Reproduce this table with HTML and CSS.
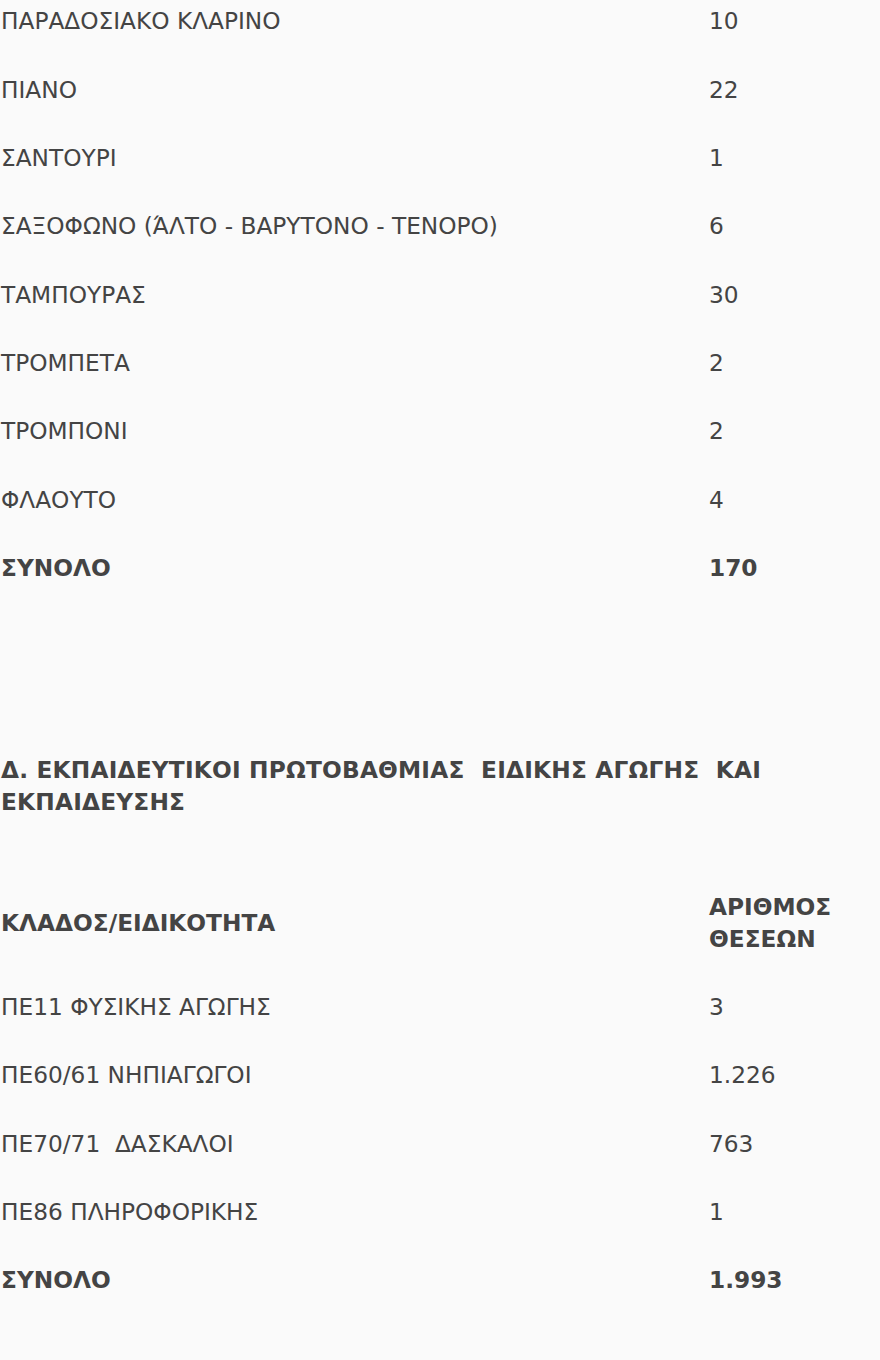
FILE: index.html
```html
<!DOCTYPE html>
<html lang="el">
<head>
<meta charset="utf-8">
<title>Θέσεις</title>
<link rel="stylesheet" href="styles.css">
</head>
<body>
<div class="page">
  <table class="list first">
    <tbody>
      <tr><td class="name">ΠΑΡΑΔΟΣΙΑΚΟ ΚΛΑΡΙΝΟ</td><td class="num">10</td></tr>
      <tr><td class="name">ΠΙΑΝΟ</td><td class="num">22</td></tr>
      <tr><td class="name">ΣΑΝΤΟΥΡΙ</td><td class="num">1</td></tr>
      <tr><td class="name">ΣΑΞΟΦΩΝΟ (ΆΛΤΟ - ΒΑΡΥΤΟΝΟ - ΤΕΝΟΡΟ)</td><td class="num">6</td></tr>
      <tr><td class="name">ΤΑΜΠΟΥΡΑΣ</td><td class="num">30</td></tr>
      <tr><td class="name">ΤΡΟΜΠΕΤΑ</td><td class="num">2</td></tr>
      <tr><td class="name">ΤΡΟΜΠΟΝΙ</td><td class="num">2</td></tr>
      <tr><td class="name">ΦΛΑΟΥΤΟ</td><td class="num">4</td></tr>
      <tr class="total"><td class="name">ΣΥΝΟΛΟ</td><td class="num">170</td></tr>
    </tbody>
  </table>

  <h3 class="section">Δ. ΕΚΠΑΙΔΕΥΤΙΚΟΙ ΠΡΩΤΟΒΑΘΜΙΑΣ &nbsp;ΕΙΔΙΚΗΣ ΑΓΩΓΗΣ &nbsp;ΚΑΙ ΕΚΠΑΙΔΕΥΣΗΣ</h3>

  <table class="list second">
    <thead>
      <tr class="head"><th class="name">ΚΛΑΔΟΣ/ΕΙΔΙΚΟΤΗΤΑ</th><th class="num">ΑΡΙΘΜΟΣ ΘΕΣΕΩΝ</th></tr>
    </thead>
    <tbody>
      <tr><td class="name">ΠΕ11 ΦΥΣΙΚΗΣ ΑΓΩΓΗΣ</td><td class="num">3</td></tr>
      <tr><td class="name">ΠΕ60/61 ΝΗΠΙΑΓΩΓΟΙ</td><td class="num">1.226</td></tr>
      <tr><td class="name">ΠΕ70/71 &nbsp;ΔΑΣΚΑΛΟΙ</td><td class="num">763</td></tr>
      <tr><td class="name">ΠΕ86 ΠΛΗΡΟΦΟΡΙΚΗΣ</td><td class="num">1</td></tr>
      <tr class="total"><td class="name">ΣΥΝΟΛΟ</td><td class="num">1.993</td></tr>
    </tbody>
  </table>
</div>
</body>
</html>
```

FILE: styles.css
```css
html, body {
  margin: 0;
  padding: 0;
  background: #fafafa;
}

body {
  font-family: "DejaVu Sans", Verdana, sans-serif;
  color: #444444;
}

.page {
  width: 880px;
  margin-top: -13px;
}

.list {
  width: 880px;
  border-collapse: collapse;
  border-spacing: 0;
  font-size: 23.25px;
  table-layout: fixed;
}

.list td,
.list th {
  padding: 18.2px 0 18.2px 1px;
  line-height: 32px;
  vertical-align: middle;
  text-align: left;
  font-weight: normal;
}

.list .name {
  width: 707px;
}

.list .num {
  width: 173px;
}

.list .total td,
.list .head th {
  font-weight: bold;
}

.section {
  margin: 152px 0 54px;
  padding-left: 1px;
  font-size: 23.25px;
  line-height: 32px;
  font-weight: bold;
  letter-spacing: 0.2px;
}
```
